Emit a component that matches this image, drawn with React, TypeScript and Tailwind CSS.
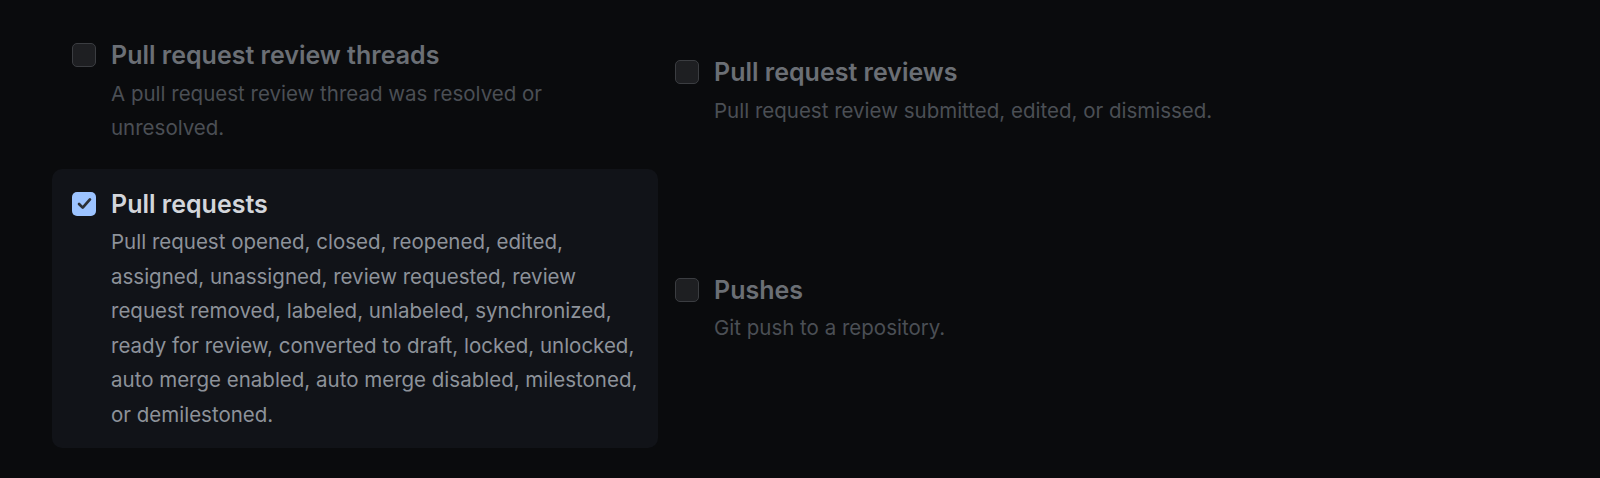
import React from "react";

type Item = {
    title: string;
    description: string;
    checked?: boolean;
};

function Checkbox({ checked }: { checked?: boolean }) {
    if (checked) {
        return (
            <span className="mt-[5px] flex h-[24px] w-[24px] flex-shrink-0 items-center justify-center rounded-[5px] bg-[#9cc3ff]">
                <svg viewBox="0 0 16 16" className="h-[19px] w-[19px]" fill="none">
                    <path d="M3.4 8.4 L6.5 11.5 L12.6 4.6" stroke="#2b2f36" strokeWidth="2.3" strokeLinecap="round" strokeLinejoin="round" />
                </svg>
            </span>
        );
    }
    return <span className="mt-[5px] h-[24px] w-[24px] flex-shrink-0 rounded-[5px] border-[1.5px] border-[#3b3d41] bg-[#1e1f22]" />;
}

function EventItem({ title, description, checked }: Item) {
    return (
        <label
            className={`flex items-start gap-[15px] rounded-[10px] pt-[18px] pb-[16px] pl-[20px] pr-[8px] ${
                checked ? "bg-[#111318]" : ""
            }`}
        >
            <Checkbox checked={checked} />
            <div className="min-w-0">
                <div
                    className={`text-[25px] leading-[34.5px] font-semibold ${
                        checked ? "text-[#d3d6db]" : "text-[#6b6f75]"
                    }`}
                >
                    {title}
                </div>
                <p
                    className={`mt-[4px] text-[20.5px] leading-[34.5px] ${
                        checked ? "text-[#8d929a]" : "text-[#4b4f55]"
                    }`}
                >
                    {description}
                </p>
            </div>
        </label>
    );
}

export default function App() {
    return (
        <div className="min-h-screen bg-[#0a0b0d] pt-[20px] pl-[52px]" style={{ fontFamily: "Inter, 'Noto Sans', sans-serif" }}>
            <div className="grid grid-cols-[606px_1fr] items-center gap-y-[7px]">
                <EventItem
                    title="Pull request review threads"
                    description="A pull request review thread was resolved or unresolved."
                />
                <div className="-ml-[3px]">
                    <EventItem
                        title="Pull request reviews"
                        description="Pull request review submitted, edited, or dismissed."
                    />
                </div>
                <EventItem
                    checked
                    title="Pull requests"
                    description="Pull request opened, closed, reopened, edited, assigned, unassigned, review requested, review request removed, labeled, unlabeled, synchronized, ready for review, converted to draft, locked, unlocked, auto merge enabled, auto merge disabled, milestoned, or demilestoned."
                />
                <div className="-ml-[3px]">
                    <EventItem title="Pushes" description="Git push to a repository." />
                </div>
            </div>
        </div>
    );
}
